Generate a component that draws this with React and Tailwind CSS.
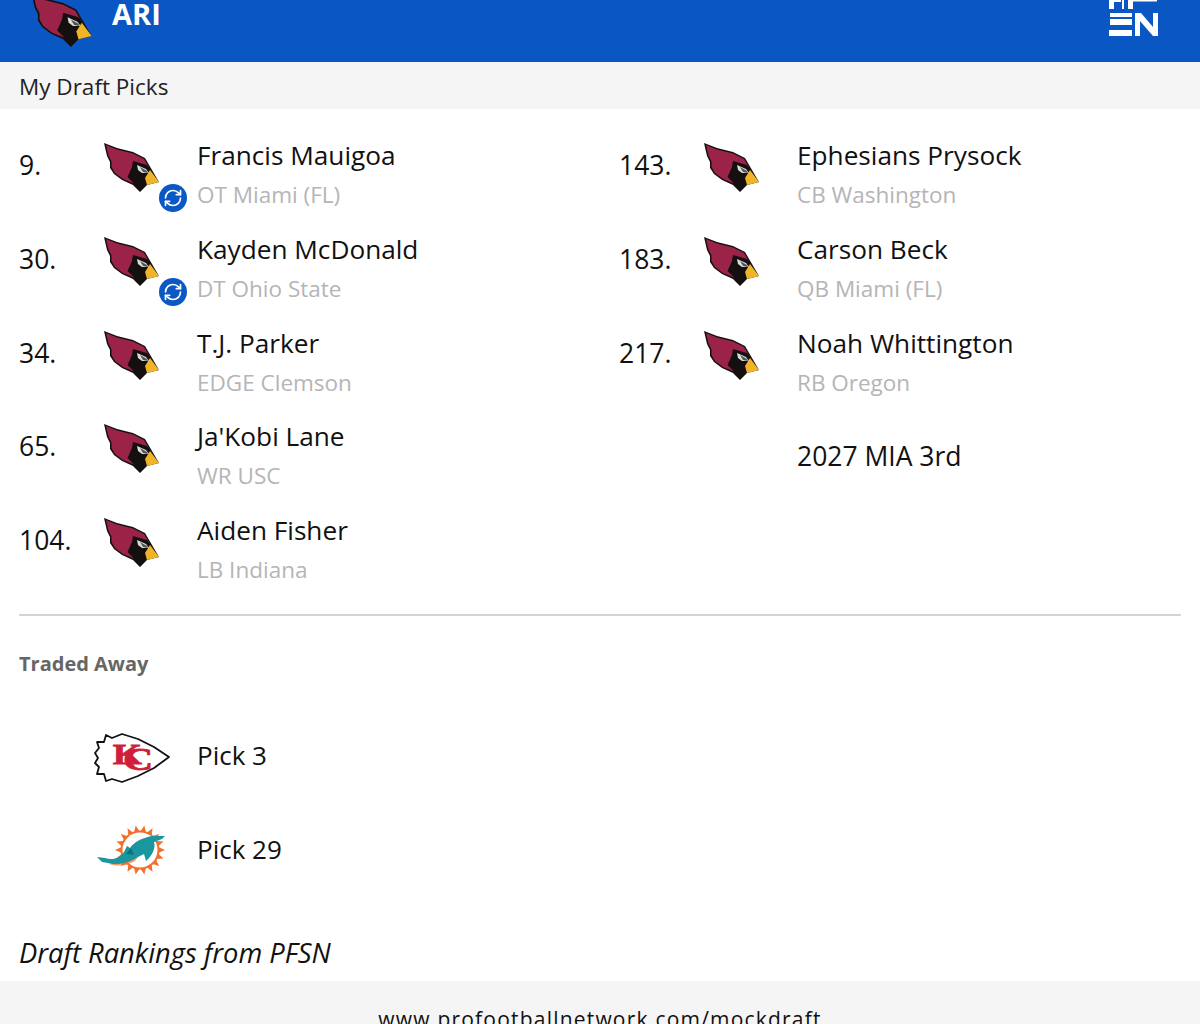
import React from "react";
import { RefreshCw } from "lucide-react";

function Bird({ className = "" }) {
  return (
    <svg viewBox="0 0 57 51" className={className}>
      <path d="M1 1 L14 6 L30 10 L42 16 L49 28 L56 40 L44 43 L37 50 L30 43 L19 38 L11 32 L7 26 L7 20 L4 14 Z" fill="#141010" />
      <path d="M3 3 L14 7.5 L30 11.5 L41 17 L47 27 L44 23 L30 19 L29 25 L24.5 35 L31 41.5 L20 37 L12 31 L8.5 25 L8.5 19.5 L5.5 13.5 Z" fill="#9b2348" />
      <path d="M34 23 L43 27 L46 31 L39 31 L35 28 Z" fill="#dcdcdc" />
      <path d="M37 25 L44 29 L45 31 L40 30 Z" fill="#555" />
      <path d="M47 28 L56 40 L44 43 L42 36 Z" fill="#f0b429" />
    </svg>
  );
}

function Chiefs() {
  return (
    <svg viewBox="0 0 76 50" className="h-[50px] w-[76px]">
      <path
        d="M12 2 L18 5 L28 1 L44 6 L60 14 L75 24 L60 35 L44 43 L28 49 L18 46 L12 48 L10 41 L3 41 L5 34 L1 30 L4 25 L1 20 L5 15 L3 9 L10 9 Z"
        fill="#fff"
        stroke="#111"
        strokeWidth="1.8"
        strokeLinejoin="round"
      />
      <text transform="scale(1.25 1)" x="15" y="31" fontFamily="'Liberation Serif', serif" fontWeight="700" fontSize="30" fill="#cf1f3a" stroke="#cf1f3a" strokeWidth="0.8">K</text>
      <text transform="scale(1.35 1)" x="21.5" y="37" fontFamily="'Liberation Serif', serif" fontWeight="700" fontSize="31" fill="#cf1f3a" stroke="#cf1f3a" strokeWidth="0.8">C</text>
    </svg>
  );
}

function Dolphins() {
  const rays = [];
  for (let i = 0; i < 18; i++) {
    const a = (i / 18) * Math.PI * 2;
    const w = 0.14;
    rays.push(
      `${44 + 19 * Math.cos(a - w)},${26 + 19 * Math.sin(a - w)} ${44 + 25 * Math.cos(a)},${26 + 25 * Math.sin(a)} ${44 + 19 * Math.cos(a + w)},${26 + 19 * Math.sin(a + w)}`
    );
  }
  return (
    <svg viewBox="0 0 72 52" className="h-[52px] w-[72px]">
      {rays.map((p, i) => (
        <polygon key={i} points={p} fill="#f0702c" />
      ))}
      <circle cx="44" cy="26" r="19.5" fill="#f0702c" />
      <circle cx="44" cy="26" r="17.5" fill="#fff" />
      <path
        d="M1 33 L9 34 C18 37 24 33 28 28 L31 22 L34 24 C38 18 46 14 56 12 L69 12 L66 15 L58 18 C60 24 56 32 50 37 L48 30 L42 33 C34 39 22 42 12 39 L6 38 Z"
        fill="#1a979e"
      />
      <path d="M30 30 L35 24 L38 31 Z" fill="#12707a" />
      <path d="M12 39.5 C22 41 32 39 42 33 L39 37 C30 42 20 43 12 39.5 Z" fill="#f0702c" opacity="0.65" />
    </svg>
  );
}

function PfsnLogo() {
  return (
    <svg viewBox="0 0 52 37" className="h-[37px] w-[52px]" fill="#fff">
      <rect x="1" y="0" width="5" height="9" />
      <rect x="6" y="0" width="7" height="2" />
      <rect x="14" y="0" width="2" height="9" />
      <rect x="20" y="0" width="5" height="9" />
      <rect x="25" y="0" width="24" height="1.5" />
      <path d="M2 13 H24 V17 H2 Z" />
      <path d="M2 19 H24 V25 L2 25 Z" />
      <rect x="1" y="30" width="23" height="6" />
      <path d="M27 13 H33 L45 27 V13 H50 V36 H45 L32 21 V36 H27 Z" />
    </svg>
  );
}

function Pick({ no, name, sub, traded }) {
  return (
    <div className="flex h-[93.75px] items-start">
      <div className="w-[84px] pt-[20px] text-[26.5px] leading-[40px] text-[#111]">{no}</div>
      <div className="relative h-[93.75px] w-[94px] pt-[17px]">
        <Bird className="h-[51px] w-[57px]" />
        {traded && (
          <div className="absolute left-[56px] top-[59px] flex h-[28px] w-[28px] items-center justify-center rounded-full bg-[#0b57c4]">
            <RefreshCw size={20} color="#fff" strokeWidth={2} />
          </div>
        )}
      </div>
      <div>
        <div className="pt-[10px] text-[26.2px] leading-[40px] text-[#111]">{name}</div>
        <div className="mt-[1px] text-[22.5px] leading-[38px] text-[#b5b5b5]">{sub}</div>
      </div>
    </div>
  );
}

const left = [
  { no: "9.", name: "Francis Mauigoa", sub: "OT Miami (FL)", traded: true },
  { no: "30.", name: "Kayden McDonald", sub: "DT Ohio State", traded: true },
  { no: "34.", name: "T.J. Parker", sub: "EDGE Clemson" },
  { no: "65.", name: "Ja'Kobi Lane", sub: "WR USC" },
  { no: "104.", name: "Aiden Fisher", sub: "LB Indiana" },
];
const right = [
  { no: "143.", name: "Ephesians Prysock", sub: "CB Washington" },
  { no: "183.", name: "Carson Beck", sub: "QB Miami (FL)" },
  { no: "217.", name: "Noah Whittington", sub: "RB Oregon" },
];

export default function App() {
  return (
    <div className="flex h-[1024px] flex-col overflow-hidden bg-white font-['Open_Sans','Noto_Sans',sans-serif]">
      <header className="flex h-[62px] shrink-0 items-start justify-between overflow-hidden bg-[#0a57c4] pl-[30px] pr-[40px]">
        <div className="flex items-start">
          <Bird className="-mt-[8px] h-[56px] w-[63px]" />
          <span className="-mt-[6px] ml-[19px] text-[29px] font-bold leading-[40px] text-white">ARI</span>
        </div>
        <PfsnLogo />
      </header>
      <div className="flex h-[47px] shrink-0 items-center bg-[#f5f5f5] px-[19px] pt-[3px] text-[22.5px] text-[#222]">My Draft Picks</div>
      <div className="grid h-[505px] shrink-0 grid-cols-2 pt-[16px]">
        <div className="pl-[19px]">
          {left.map((p) => (
            <Pick key={p.no} {...p} />
          ))}
        </div>
        <div className="pl-[19px]">
          {right.map((p) => (
            <Pick key={p.no} {...p} />
          ))}
          <div className="pl-[178px] pt-[29.75px] text-[26.5px] leading-[40px] text-[#111]">2027 MIA 3rd</div>
        </div>
      </div>
      <div className="mx-[19px] h-[2px] shrink-0 bg-[#d4d4d4]" />
      <div className="shrink-0 px-[19px] pt-[33px] text-[20px] font-bold leading-[30px] text-[#666]">Traded Away</div>
      <div className="box-content flex h-[94px] shrink-0 items-center pl-[94px] pt-[29px]">
        <div className="mt-[6px] w-[103px]"><Chiefs /></div>
        <span className="text-[26px] text-[#111]">Pick 3</span>
      </div>
      <div className="flex h-[94px] shrink-0 items-center pl-[96px]">
        <div className="mt-[2px] w-[101px]"><Dolphins /></div>
        <span className="text-[26px] text-[#111]">Pick 29</span>
      </div>
      <div className="shrink-0 px-[19px] pt-[37px] text-[27.3px] italic leading-[40px] text-[#111]">Draft Rankings from PFSN</div>
      <div className="mt-[8px] min-h-0 flex-1 bg-[#f5f5f5] pt-[23px] text-center text-[21px] leading-[30px] tracking-[1.2px] text-[#111]">www.profootballnetwork.com/mockdraft</div>
    </div>
  );
}
